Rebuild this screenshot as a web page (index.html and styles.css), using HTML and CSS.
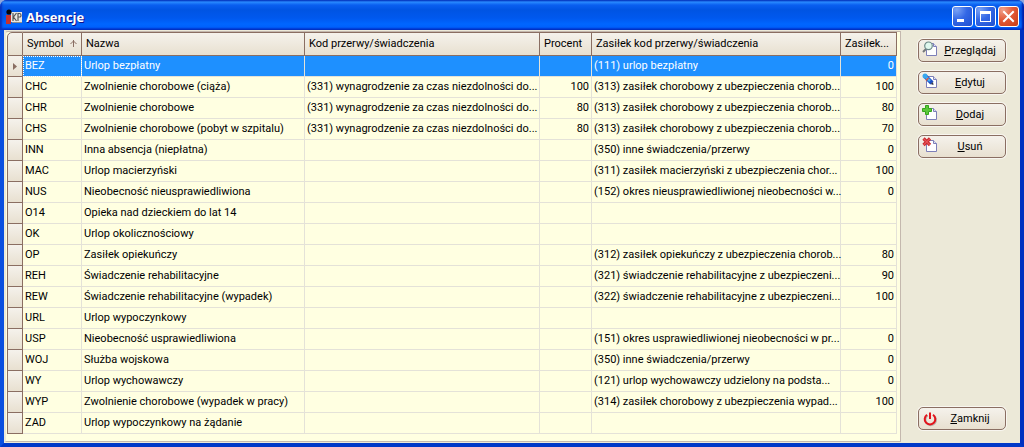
FILE: index.html
```html
<!DOCTYPE html>
<html lang="pl">
<head>
<meta charset="utf-8">
<title>Absencje</title>
<link rel="stylesheet" href="styles.css">
</head>
<body>
<div class="window">
  <header class="titlebar">
    <svg class="app-icon" width="16" height="16" viewBox="0 0 16 16" aria-hidden="true">
      <rect x="5" y="3" width="11" height="10" fill="#e9e7e2"/>
      <rect x="0" y="6" width="5" height="9" fill="#c8322c"/>
      <circle cx="3" cy="3" r="2.600" fill="#050505"/>
      <path d="M7 4v8M10.500 4L7.500 8l3 4M12 12V4.500h1.500q1.500 0 1.500 1.800T13.500 8H12" fill="none" stroke="#555" stroke-width="1.200"/>
      <path d="M6 13.500h10" stroke="#8d8d8d"/>
    </svg>
    <h1 class="title">Absencje</h1>
    <div class="window-buttons">
      <button class="win-btn" type="button" aria-label="Minimalizuj"><svg width="19" height="19" viewBox="0 0 19 19"><rect x="4" y="12" width="7" height="3" fill="#fff"/></svg></button>
      <button class="win-btn" type="button" aria-label="Maksymalizuj"><svg width="19" height="19" viewBox="0 0 19 19"><path d="M4 4h11v11H4zM5 7v7h9V7z" fill="#fff" fill-rule="evenodd"/></svg></button>
      <button class="win-btn win-close" type="button" aria-label="Zamknij okno"><svg width="19" height="19" viewBox="0 0 19 19"><path d="M5 5l9 9M14 5l-9 9" stroke="#fff" stroke-width="2" stroke-linecap="square"/></svg></button>
    </div>
  </header>
  <main class="client">
    <section class="grid-panel">
      <table class="grid">
        <colgroup>
          <col class="c-mark"><col class="c-symbol"><col class="c-name"><col class="c-code"><col class="c-percent"><col class="c-benefit"><col class="c-rate">
        </colgroup>
        <thead>
          <tr><th class="corner"></th><th>Symbol<svg class="sort" width="7" height="7" viewBox="0 0 7 7"><path d="M3.500 0v7M0.500 4L3.500 1l3 3" fill="none" stroke="#8a6e62"/></svg></th><th>Nazwa</th><th>Kod przerwy/świadczenia</th><th>Procent</th><th>Zasiłek kod przerwy/świadczenia</th><th>Zasiłek...</th></tr>
        </thead>
        <tbody>
          <tr class="selected"><th><svg class="marker" width="4" height="7" viewBox="0 0 4 7"><path d="M0 0l4 3.500L0 7z" fill="#8a6e62"/></svg></th><td class="focused">BEZ</td><td>Urlop bezpłatny</td><td></td><td class="num"></td><td>(111) urlop bezpłatny</td><td class="num">0</td></tr>
          <tr><th></th><td>CHC</td><td>Zwolnienie chorobowe (ciąża)</td><td>(331) wynagrodzenie za czas niezdolności do...</td><td class="num">100</td><td>(313) zasiłek chorobowy z ubezpieczenia chorob...</td><td class="num">100</td></tr>
          <tr><th></th><td>CHR</td><td>Zwolnienie chorobowe</td><td>(331) wynagrodzenie za czas niezdolności do...</td><td class="num">80</td><td>(313) zasiłek chorobowy z ubezpieczenia chorob...</td><td class="num">80</td></tr>
          <tr><th></th><td>CHS</td><td>Zwolnienie chorobowe (pobyt w szpitalu)</td><td>(331) wynagrodzenie za czas niezdolności do...</td><td class="num">80</td><td>(313) zasiłek chorobowy z ubezpieczenia chorob...</td><td class="num">70</td></tr>
          <tr><th></th><td>INN</td><td>Inna absencja (niepłatna)</td><td></td><td class="num"></td><td>(350) inne świadczenia/przerwy</td><td class="num">0</td></tr>
          <tr><th></th><td>MAC</td><td>Urlop macierzyński</td><td></td><td class="num"></td><td>(311) zasiłek macierzyński z ubezpieczenia chor...</td><td class="num">100</td></tr>
          <tr><th></th><td>NUS</td><td>Nieobecność nieusprawiedliwiona</td><td></td><td class="num"></td><td>(152) okres nieusprawiedliwionej nieobecności w...</td><td class="num">0</td></tr>
          <tr><th></th><td>O14</td><td>Opieka nad dzieckiem do lat 14</td><td></td><td class="num"></td><td></td><td class="num"></td></tr>
          <tr><th></th><td>OK</td><td>Urlop okolicznościowy</td><td></td><td class="num"></td><td></td><td class="num"></td></tr>
          <tr><th></th><td>OP</td><td>Zasiłek opiekuńczy</td><td></td><td class="num"></td><td>(312) zasiłek opiekuńczy z ubezpieczenia chorob...</td><td class="num">80</td></tr>
          <tr><th></th><td>REH</td><td>Świadczenie rehabilitacyjne</td><td></td><td class="num"></td><td>(321) świadczenie rehabilitacyjne z ubezpieczeni...</td><td class="num">90</td></tr>
          <tr><th></th><td>REW</td><td>Świadczenie rehabilitacyjne (wypadek)</td><td></td><td class="num"></td><td>(322) świadczenie rehabilitacyjne z ubezpieczeni...</td><td class="num">100</td></tr>
          <tr><th></th><td>URL</td><td>Urlop wypoczynkowy</td><td></td><td class="num"></td><td></td><td class="num"></td></tr>
          <tr><th></th><td>USP</td><td>Nieobecność usprawiedliwiona</td><td></td><td class="num"></td><td>(151) okres usprawiedliwionej nieobecności w pr...</td><td class="num">0</td></tr>
          <tr><th></th><td>WOJ</td><td>Służba wojskowa</td><td></td><td class="num"></td><td>(350) inne świadczenia/przerwy</td><td class="num">0</td></tr>
          <tr><th></th><td>WY</td><td>Urlop wychowawczy</td><td></td><td class="num"></td><td>(121) urlop wychowawczy udzielony na podsta...</td><td class="num">0</td></tr>
          <tr><th></th><td>WYP</td><td>Zwolnienie chorobowe (wypadek w pracy)</td><td></td><td class="num"></td><td>(314) zasiłek chorobowy z ubezpieczenia wypad...</td><td class="num">100</td></tr>
          <tr><th></th><td>ZAD</td><td>Urlop wypoczynkowy na żądanie</td><td></td><td class="num"></td><td></td><td class="num"></td></tr>
        </tbody>
      </table>
    </section>
    <aside class="actions">
      <button class="action" type="button">
        <svg width="16" height="16" viewBox="0 0 16 16" aria-hidden="true"><path d="M4.500 2.500h7l3 3v9h-10z" fill="#fff" stroke="#7d7fb8"/><path d="M11.500 2.500v3h3" fill="#dfe2f4" stroke="#7d7fb8"/><path d="M4 8L1 11" stroke="#74777a" stroke-width="2"/><circle cx="6.500" cy="4.800" r="3.800" fill="#e0f8ee" stroke="#6d8a88" stroke-width="1.200"/></svg>
        <span><u>P</u>rzeglądaj</span></button>
      <button class="action" type="button">
        <svg width="16" height="16" viewBox="0 0 16 16" aria-hidden="true"><path d="M4.500 3.500h7l3 3v8h-10z" fill="#fff" stroke="#7d7fb8"/><path d="M11.500 3.500v3h3" fill="#dfe2f4" stroke="#7d7fb8"/><path d="M3 3l7 7" stroke="#1d4fc4" stroke-width="4.500"/><path d="M3 3l5 5" stroke="#42b4f5" stroke-width="2.500"/><circle cx="3" cy="3" r="2.500" fill="#39a7ee"/><path d="M4 7.500l2.500-2.500" stroke="#e4523c" stroke-width="1.500"/><path d="M8.500 11l3 1-.5-3z" fill="#30364d"/></svg>
        <span><u>E</u>dytuj</span></button>
      <button class="action" type="button">
        <svg width="16" height="16" viewBox="0 0 16 16" aria-hidden="true"><path d="M4.500 3.500h7l3 3v8h-10z" fill="#fff" stroke="#7d7fb8"/><path d="M11.500 3.500v3h3" fill="#dfe2f4" stroke="#7d7fb8"/><path d="M3.500.5h3v3h3v3h-3v3h-3v-3h-3v-3h3z" fill="#5bc83a" stroke="#36a31e"/></svg>
        <span><u>D</u>odaj</span></button>
      <button class="action" type="button">
        <svg width="16" height="16" viewBox="0 0 16 16" aria-hidden="true"><path d="M4.500 3.500h7l3 3v8h-10z" fill="#fff" stroke="#7d7fb8"/><path d="M11.500 3.500v3h3" fill="#dfe2f4" stroke="#7d7fb8"/><path d="M1.500 1.500l6.500 6.500M8 1.500L1.500 8" stroke="#c92a2e" stroke-width="3.200"/><path d="M1.800 1.800l6 6M7.700 1.800l-6 6" stroke="#e8555a" stroke-width="1.200"/></svg>
        <span><u>U</u>suń</span></button>
      <button class="action action-close" type="button">
        <svg width="16" height="16" viewBox="0 0 16 16" aria-hidden="true"><path d="M5.700 4.500a5.300 5.300 0 1 0 6 0" fill="none" stroke="#b8b0a8" stroke-width="2"/><path d="M5 3.800a5.300 5.300 0 1 0 6 0M8 1.500v6.500" fill="none" stroke="#e3131b" stroke-width="2"/></svg>
        <span><u>Z</u>amknij</span></button>
    </aside>
  </main>
</div>
</body>
</html>
```
FILE: styles.css
```css
* { box-sizing: border-box; }

body {
  margin: 0;
  background: #8ea6dc;
  font: 11px/14px Roboto, "Liberation Sans", sans-serif;
  color: #000;
}

.window {
  display: flex;
  flex-direction: column;
  min-height: 100vh;
  border-radius: 7px 7px 0 0;
  overflow: hidden;
  background: #0a4fe0;
}

.titlebar {
  display: flex;
  align-items: center;
  gap: 4px;
  height: 30px;
  padding: 3px 5px 0 6px;
  background: linear-gradient(#0844c8 0, #2a8bff 2px, #0a5ff0 5px, #0054e3 10px, #0058ee 18px, #0066ff 24px, #0061fc 27px, #003dd7 29px, #0036c4 30px);
  box-shadow: inset 2px 0 2px #0533c0, inset -2px 0 2px #0020a8;
}

.title {
  flex: 1;
  margin: 0;
  font: bold 13px/16px "Open Sans", "DejaVu Sans", sans-serif;
  color: #fff;
  text-shadow: 1px 1px 0 #0f1089;
}

.window-buttons { display: flex; gap: 2px; }

.win-btn {
  width: 21px;
  height: 21px;
  padding: 0;
  border: 1px solid #fff;
  border-radius: 3px;
  background: radial-gradient(circle at 20% 15%, #7ba3f5, #3468e6 45%, #1f4fd0);
}

.win-btn svg { display: block; }

.win-close { background: radial-gradient(circle at 20% 15%, #f0a08a, #e25a38 45%, #c93c14); }

.client {
  flex: 1;
  display: flex;
  padding-top: 1px;
  background: #ece9d8;
  border: solid #0a4fe0;
  border-width: 0 4px 4px;
  border-color: #0a4fe0 #0030c0 #0038c8 #0a4fe0;
}

.grid-panel {
  flex: 1;
  min-width: 0;
  margin: 0 0 1px 1px;
  padding: 0 3px 0 1px;
  border: 1px solid #c4b8ae;
  border-left-color: #ece9d8;
  border-radius: 3px 0 0 0;
  background: #ffffe1;
}

.grid {
  width: 100%;
  table-layout: fixed;
  border-collapse: separate;
  border-spacing: 0;
}

.c-mark { width: 16px; }
.c-symbol { width: 59px; }
.c-name { width: 223px; }
.c-code { width: 235px; }
.c-percent { width: 52px; }
.c-benefit { width: 249px; }
.c-rate { width: 56px; }

.grid th,
.grid td {
  height: 21px;
  padding: 0 0 0 2px;
  white-space: nowrap;
  text-align: left;
  font-weight: normal;
  border: solid #e4e2d8;
  border-width: 0 1px 1px 0;
}

.grid th {
  background: linear-gradient(#f5f2ec, #e8e0d0);
  border-color: #8a6e62;
}

.grid thead th {
  height: 24px;
  padding: 0 0 0 4px;
  border-top: 1px solid #8a6e62;
}

.grid .corner { border-left: 1px solid #8a6e62; border-radius: 5px 0 0 0; }

.grid tbody th { padding: 0; border-left: 1px solid #8a6e62; }

.grid .num { padding-right: 2px; text-align: right; }

.grid .selected td { background: #1e90ff; color: #fff; }

.grid .focused { outline: 1px dotted #fff; outline-offset: -1px; }

.sort { margin-left: 6px; }

.marker { display: block; margin-left: 5px; }

.actions {
  display: flex;
  flex-direction: column;
  gap: 9px;
  padding: 8px 14px 13px 17px;
}

.action {
  display: flex;
  align-items: center;
  width: 88px;
  height: 23px;
  padding: 0 3px;
  border: 1px solid #8a6e62;
  border-radius: 5px;
  background: linear-gradient(#f5f2ec, #e8e0d0);
  box-shadow: 0 0 0 1px #f8f6f0;
  font: inherit;
  color: #000;
}

.action svg { margin-bottom: 3px; }

.action span { flex: 1; text-align: center; }

.action-close { margin-top: auto; }

.action-close svg { margin-bottom: 0; }
```
